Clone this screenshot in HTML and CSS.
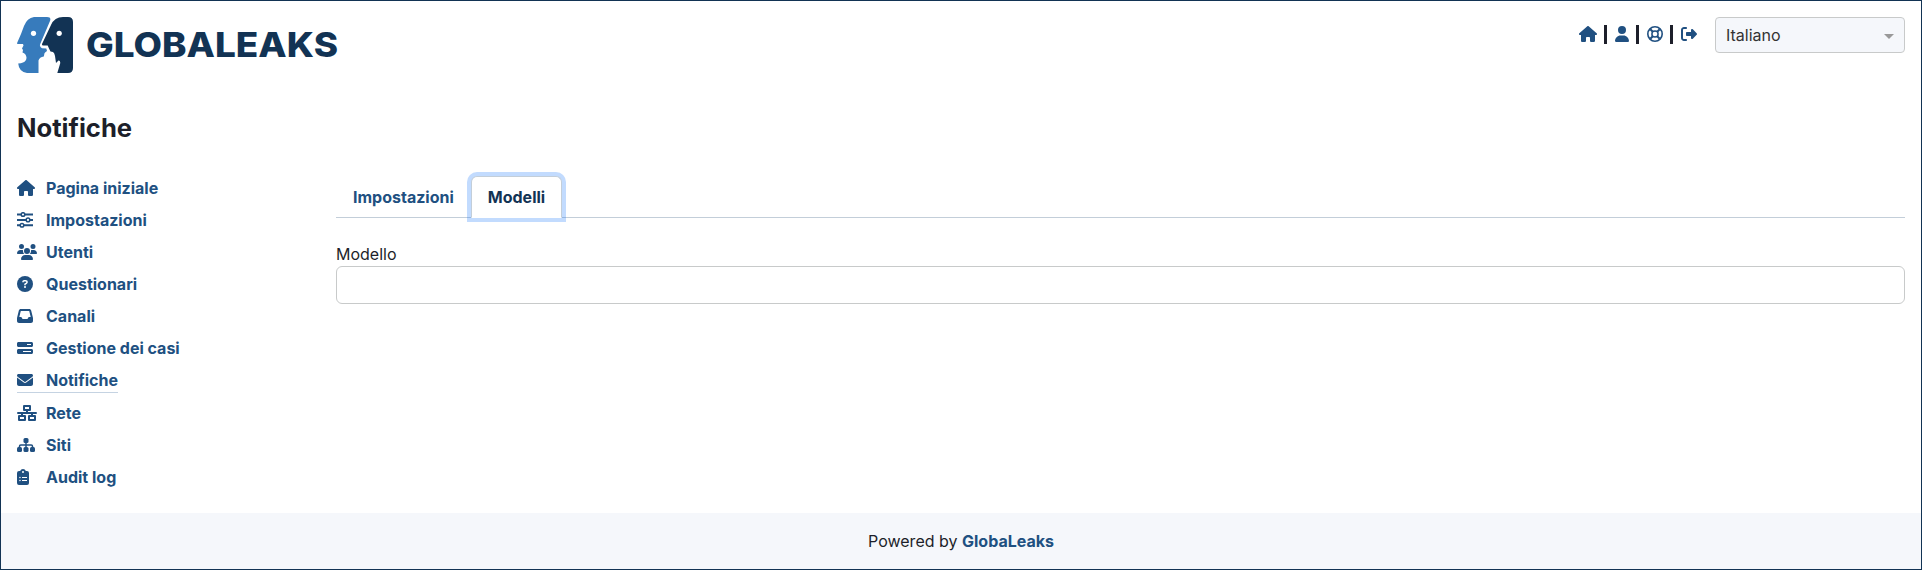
FILE: index.html
```html
<!DOCTYPE html>
<html lang="it">
<head>
<meta charset="utf-8">
<title>GlobaLeaks</title>
<link rel="stylesheet" href="styles.css">
</head>
<body>
<svg class="sprite" width="0" height="0">
  <symbol id="house" viewBox="0 0 576 512"><path d="M575.8 255.5c0 18-15 32.1-32 32.1l-32 0 .7 160.2c0 2.7-.2 5.4-.5 8.1l0 16.2c0 22.1-17.9 40-40 40l-16 0c-1.1 0-2.2 0-3.3-.1c-1.4 .1-2.8 .1-4.2 .1L416 512l-24 0c-22.1 0-40-17.9-40-40l0-24 0-64c0-17.700-14.300-32-32-32l-64 0c-17.700 0-32 14.300-32 32l0 64 0 24c0 22.100-17.900 40-40 40l-24 0-31.900 0c-1.500 0-3-.1-4.500-.2c-1.200 .1-2.400 .2-3.600 .2l-16 0c-22.100 0-40-17.900-40-40l0-112c0-.9 0-1.900 .1-2.800l0-69.700-32 0c-18 0-32-14-32-32.100c0-9 3-17 10-24L266.400 8c7-7 15-8 22-8s15 2 21 7L564.800 231.500c8 7 12 15 11 24z"/></symbol>
</svg>
<div class="page">
  <header class="header">
    <a class="brand">
      <svg class="brand-mark" viewBox="0 0 56 56">
        <path fill="#377bbc" d="M17 0H30Q34.500 0 33 4L23 27.500Q22.500 30 25 31.200L29.300 31.500 30 34Q28 35.300 27.500 36.200L26.800 39.500Q22.500 40 21.500 43.500V56H10Q2 55 1.200 46.500Q4 46.500 6 45.500Q9.500 44 9.500 40.500Q9 36.500 5.500 35.500L6 33 5 31.500 6.500 28.500 6 27H.5Q-.2 26.500.3 25.500L4 17 7 9Q10 1 17 0Z"/>
        <path fill="#123354" d="M46 0H51Q56 0 56 5V51Q56 56 51 56H40.300L43.300 46Q43.300 43 41.500 43.500L39 46 38 39Q37.500 36 36 35L33.500 34.500 32 31.500 30.700 28.500H26.500Q24.500 28.500 25 27L34 8Q37.500 0 46 0Z"/>
        <circle cx="16.500" cy="16.300" r="2.600" fill="#fff"/>
        <circle cx="42.200" cy="16.300" r="2.600" fill="#fff"/>
      </svg>
      <svg class="brand-name" width="252" height="36"><text x="0" y="30" textLength="252" lengthAdjust="spacingAndGlyphs">GLOBALEAKS</text></svg>
    </a>
    <div class="tools">
      <nav class="quick">
        <svg class="icon" width="18" height="16"><use href="#house"/></svg>
        <span class="bar"></span>
        <svg class="icon" width="14" height="16" viewBox="0 0 448 512"><path d="M224 256A128 128 0 1 0 224 0a128 128 0 1 0 0 256zm-45.700 48C79.800 304 0 383.800 0 482.300C0 498.700 13.300 512 29.700 512l388.600 0c16.400 0 29.700-13.300 29.700-29.700C448 383.800 368.200 304 269.700 304l-91.400 0z"/></svg>
        <span class="bar"></span>
        <svg class="icon line" width="16" height="16" viewBox="0 0 16 16"><circle cx="8" cy="8" r="7.200" stroke-width="1.600"/><circle cx="8" cy="8" r="3.100" stroke-width="1.500"/><path stroke-width="2" d="M3.300 3.300l2.500 2.500M12.700 3.300l-2.500 2.500M3.300 12.700l2.500-2.500M12.700 12.700l-2.500-2.500"/></svg>
        <span class="bar"></span>
        <svg class="icon" width="16" height="16" viewBox="0 0 512 512"><path d="M377.900 105.900L500.700 228.700c7.200 7.200 11.300 17.100 11.300 27.300s-4.100 20.100-11.300 27.300L377.900 406.100c-6.400 6.400-15 9.900-24 9.900c-18.700 0-33.900-15.200-33.900-33.900l0-62.100-128 0c-17.700 0-32-14.300-32-32l0-64c0-17.700 14.300-32 32-32l128 0 0-62.100c0-18.700 15.200-33.900 33.900-33.900c9 0 17.600 3.600 24 9.900zM160 96L96 96c-17.700 0-32 14.300-32 32l0 256c0 17.700 14.300 32 32 32l64 0c17.700 0 32 14.300 32 32s-14.300 32-32 32l-64 0c-53 0-96-43-96-96L0 128C0 75 43 32 96 32l64 0c17.700 0 32 14.300 32 32s-14.300 32-32 32z"/></svg>
      </nav>
      <div class="select"><span>Italiano</span><i class="arrow"></i></div>
    </div>
  </header>

  <h1 class="title">Notifiche</h1>

  <div class="body">
    <nav class="side">
      <a class="item"><span class="slot"><svg class="icon" width="18" height="16"><use href="#house"/></svg></span>Pagina iniziale</a>
      <a class="item"><span class="slot"><svg class="icon line" width="16" height="16" viewBox="0 0 16 16"><path stroke-width="2" d="M0 2.500h4M8 2.500h8M0 7.900h9M13 7.900h3M0 13.300h3M7 13.300h9"/><g stroke-width="1.500"><circle cx="6" cy="2.500" r="1.800"/><circle cx="11" cy="7.900" r="1.800"/><circle cx="5" cy="13.300" r="1.800"/></g></svg></span>Impostazioni</a>
      <a class="item"><span class="slot"><svg class="icon" width="20" height="16" viewBox="0 0 640 512"><path d="M144 0a80 80 0 1 1 0 160A80 80 0 1 1 144 0zM512 0a80 80 0 1 1 0 160A80 80 0 1 1 512 0zM0 298.700C0 239.800 47.800 192 106.700 192l42.700 0c15.900 0 31 3.500 44.600 9.700c-1.300 7.200-1.900 14.700-1.900 22.300c0 38.200 16.800 72.500 43.300 96L21.300 320C9.600 320 0 310.400 0 298.700zM405.300 320c26.600-23.500 43.300-57.800 43.300-96c0-7.600-.7-15-1.900-22.300c13.600-6.300 28.700-9.700 44.600-9.700l42.700 0C592.200 192 640 239.800 640 298.700c0 11.800-9.600 21.300-21.300 21.300zM224 224a96 96 0 1 1 192 0 96 96 0 1 1-192 0zM128 485.300C128 411.700 187.700 352 261.300 352l117.400 0C452.300 352 512 411.700 512 485.300c0 14.700-11.900 26.700-26.700 26.700l-330.600 0c-14.700 0-26.700-11.900-26.700-26.700z"/></svg></span>Utenti</a>
      <a class="item"><span class="slot"><svg class="icon" width="16" height="16" viewBox="0 0 16 16"><circle cx="8" cy="8" r="8"/><path fill="none" stroke="#fff" stroke-width="1.500" stroke-linecap="round" stroke-linejoin="round" d="M6 5.700C6.100 5 6.500 4.750 7.100 4.750H8.600C9.500 4.750 10.100 5.300 10.100 6.100C10.100 6.700 9.800 7.100 9.300 7.400L8 8.200V8.700"/><circle cx="8" cy="11" r="1" fill="#fff"/></svg></span>Questionari</a>
      <a class="item"><span class="slot"><svg class="icon" width="16" height="16" viewBox="0 0 512 512"><path d="M121 32C91.600 32 66 52 58.900 80.500L1.900 308.400C.6 313.500 0 318.700 0 323.900L0 416c0 35.300 28.700 64 64 64l384 0c35.300 0 64-28.700 64-64l0-92.100c0-5.200-.6-10.400-1.900-15.500l-57-227.900C446 52 420.400 32 391 32L121 32zm0 64l270 0 48 192-51.200 0c-12.100 0-23.200 6.800-28.600 17.700l-14.300 28.600c-5.400 10.800-16.500 17.700-28.600 17.700l-120.400 0c-12.100 0-23.200-6.800-28.600-17.700l-14.300-28.600c-5.400-10.800-16.500-17.700-28.600-17.700L73 288 121 96z"/></svg></span>Canali</a>
      <a class="item"><span class="slot"><svg class="icon" width="16" height="16" viewBox="0 0 512 512"><path fill-rule="evenodd" d="M448 160l-128 0 0-32 128 0 0 32zM48 64C21.500 64 0 85.500 0 112l0 64c0 26.500 21.500 48 48 48l416 0c26.500 0 48-21.500 48-48l0-64c0-26.500-21.500-48-48-48L48 64zM448 352l0 32-256 0 0-32 256 0zM48 288c-26.500 0-48 21.500-48 48l0 64c0 26.500 21.500 48 48 48l416 0c26.500 0 48-21.500 48-48l0-64c0-26.500-21.500-48-48-48L48 288z"/></svg></span>Gestione dei casi</a>
      <a class="item active"><span class="slot"><svg class="icon" width="16" height="16" viewBox="0 0 512 512"><path d="M48 64C21.500 64 0 85.500 0 112c0 15.100 7.100 29.300 19.200 38.400L236.800 313.600c11.400 8.500 27 8.500 38.400 0L492.800 150.400c12.100-9.100 19.200-23.300 19.200-38.400c0-26.500-21.500-48-48-48L48 64zM0 176L0 384c0 35.300 28.700 64 64 64l384 0c35.300 0 64-28.700 64-64l0-208L294.400 339.200c-22.800 17.100-54 17.100-76.800 0L0 176z"/></svg></span>Notifiche</a>
      <a class="item"><span class="slot"><svg class="icon line" width="20" height="16" viewBox="0 0 20 16"><g stroke-width="2" stroke-linejoin="round"><rect x="7" y="1" width="6" height="4"/><rect x="2" y="11" width="6" height="4"/><rect x="12" y="11" width="6" height="4"/><path d="M1 8H19M10 5V8M5 8V11M15 8V11" stroke-linecap="round"/></g></svg></span>Rete</a>
      <a class="item"><span class="slot"><svg class="icon" width="18" height="16" viewBox="0 0 18 16"><rect x="6.500" y="1" width="5" height="5" rx="1.500"/><rect x="0" y="10" width="5" height="5" rx="1.500"/><rect x="6.500" y="10" width="5" height="5" rx="1.500"/><rect x="13" y="10" width="5" height="5" rx="1.500"/><path class="line" stroke-width="1.500" d="M9 5V11M2.500 11V9.250Q2.500 8 3.800 8H14.200Q15.500 8 15.500 9.250V11"/></svg></span>Siti</a>
      <a class="item"><span class="slot"><svg class="icon" width="12" height="16" viewBox="0 0 12 16"><path fill-rule="evenodd" d="M6 0C4.700 0 3.600.8 3.200 2H2A2 2 0 0 0 0 4V14A2 2 0 0 0 2 16H10A2 2 0 0 0 12 14V4A2 2 0 0 0 10 2H8.800C8.400.8 7.300 0 6 0ZM6 2A1 1 0 1 1 6 4A1 1 0 0 1 6 2ZM2.200 8.500A.75.750 0 1 0 3.700 8.500A.75.750 0 1 0 2.200 8.500ZM2.200 11.500A.75.750 0 1 0 3.700 11.500A.75.750 0 1 0 2.200 11.500ZM5 8H10V9H5ZM5 11H10V12H5Z"/></svg></span>Audit log</a>
    </nav>
    <main class="main">
      <div class="tabs"><a class="tab">Impostazioni</a><a class="tab current">Modelli</a></div>
      <label class="label" for="template">Modello</label>
      <input class="field" id="template">
    </main>
  </div>

  <footer class="footer">Powered by <a class="link">GlobaLeaks</a></footer>
</div>
</body>
</html>
```
FILE: styles.css
```css
* { box-sizing: border-box; }
body {
  margin: 0;
  color: #1d1f2a;
  background: #fff;
  font: 16px/24px Inter, "Liberation Sans", sans-serif;
}
.sprite { display: none; }
.page {
  display: flex;
  flex-direction: column;
  height: 570px;
  border: 1px solid #123354;
}
.header {
  display: flex;
  justify-content: space-between;
  align-items: flex-start;
  padding: 16px 16px 0;
  height: 96px;
}
.brand { display: flex; gap: 13px; }
.brand-mark { width: 56px; height: 56px; }
.brand-name { margin-top: 10px; overflow: visible; }
.brand-name text {
  fill: #123354;
  font: 800 34px Inter, sans-serif;
}
.tools { display: flex; gap: 18px; }
.quick { display: flex; align-items: center; height: 34px; }
.icon { display: block; fill: #205081; }
.line { fill: none; stroke: #205081; }
.bar { width: 3px; height: 19px; margin: 0 8px 0 7px; background: #1d1f2a; }
.select {
  display: flex;
  align-items: center;
  justify-content: space-between;
  width: 190px;
  height: 36px;
  padding: 0 10px;
  border: 1px solid #c8caca;
  border-radius: 4px;
  background: #f5f7fb;
  color: #333;
}
.arrow {
  border: 5px solid transparent;
  border-top-color: #999;
  border-bottom: 0;
  margin-top: 3px;
}
.title {
  margin: 15px 16px 0;
  font-size: 25.6px;
  line-height: 31px;
  font-weight: 700;
}
.body { display: flex; flex: 1; padding: 0 16px; }
.side {
  display: flex;
  flex-direction: column;
  align-items: flex-start;
  width: 319px;
  padding-top: 29px;
}
.item {
  display: flex;
  align-items: center;
  height: 32px;
  color: #205081;
  font-weight: 700;
}
.item.active {
  height: 33px;
  padding-bottom: 1px;
  position: relative;
}
.item.active::after {
  content: "";
  position: absolute;
  left: 0;
  right: 0;
  bottom: 4px;
  height: 1px;
  background: #c5d3e2;
}
.slot { width: 29px; }
.main { flex: 1; display: flex; flex-direction: column; padding-top: 33px; }
.tabs {
  display: flex;
  height: 42px;
  border-bottom: 1px solid #c3ced9;
}
.tab {
  height: 42px;
  padding: 8px 16px;
  border: 1px solid transparent;
  border-radius: 6px 6px 0 0;
  color: #205081;
  font-weight: 700;
}
.tab.current {
  color: #123354;
  background: #fff;
  border-color: #c3ced9 #c3ced9 #fff;
  box-shadow: 0 0 0 4px rgba(13, 110, 253, .25);
}
.label { margin-top: 24px; }
.field {
  height: 38px;
  border: 1px solid #c8caca;
  border-radius: 6px;
  background: #fff;
}
.footer {
  height: 56px;
  padding: 16px;
  background: #f5f7fb;
  text-align: center;
}
.link { color: #205081; font-weight: 700; }
```
